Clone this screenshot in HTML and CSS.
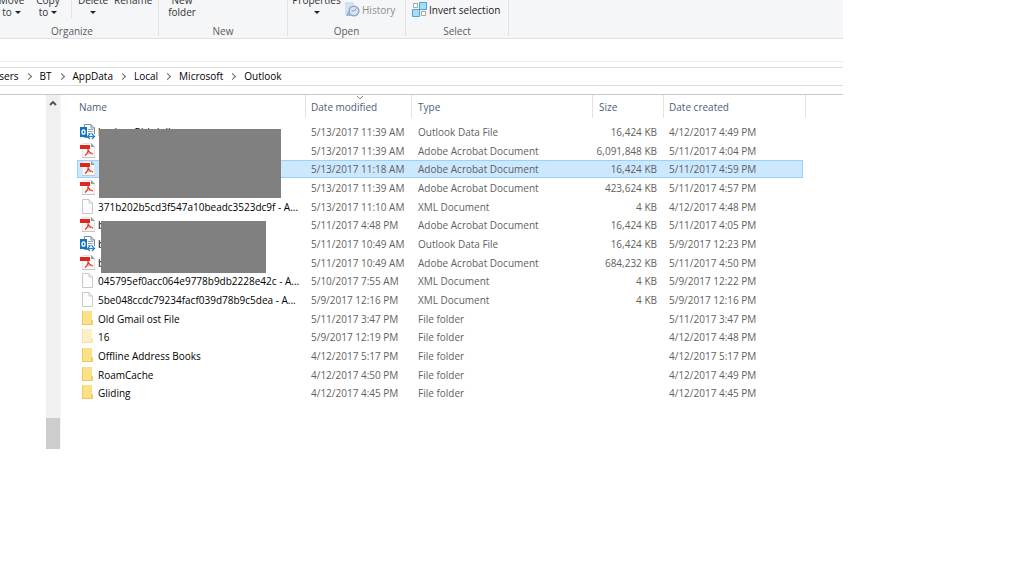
FILE: index.html
```html
<!DOCTYPE html>
<html lang="en">
<head>
<meta charset="utf-8">
<title>Outlook</title>
<link rel="stylesheet" href="styles.css">
</head>
<body>
<svg class="sprites" aria-hidden="true">
  <symbol id="i-pdf" viewBox="0 0 16 16">
    <path d="M2.500 .5H11L14.500 4V14.500H2.500Z" fill="#fbfaf9" stroke="#e6e3e1"/>
    <path d="M2 14.500H15" stroke="#c9c2bf"/>
    <path d="M11 0V4H15Z" fill="#8fa396"/>
    <path d="M0 2H10V6H0Z" fill="#e0261c"/>
    <path d="M5 12.500C7 11 8.500 8 8 5.500M8 7C9 9.500 11 10.500 13 11" fill="none" stroke="#e0362c" stroke-width="1.200"/>
    <path d="M7 10.500C9 10 10 10 12 10.500" fill="none" stroke="#ea7a73"/>
  </symbol>
  <symbol id="i-outlook" viewBox="0 0 16 16">
    <path d="M4.500 .5H11L14.500 4V13.500H4.500Z" fill="#fff" stroke="#7d8c99"/>
    <path d="M11 .5V4H14.500" fill="none" stroke="#7d8c99"/>
    <path d="M8 5.500H13M8 7.500H13M8 9.500H13" stroke="#8ea9bf"/>
    <path d="M0 3H7V13H0Z" fill="#1273c0"/>
    <ellipse cx="3.500" cy="8" rx="1.500" ry="2.200" fill="none" stroke="#fff" stroke-width="1.300"/>
    <path d="M8 10H16V15H8Z" fill="#fff"/>
    <path d="M10 10L7.500 12.500L10 15M12 10L14.500 12.500L12 15M8 12.500H14" fill="none" stroke="#1f7fc8" stroke-width="1.200"/>
  </symbol>
  <symbol id="i-file" viewBox="0 0 16 16">
    <path d="M2.500 .5H9L12.500 4V14.500H2.500Z" fill="#fdfdfd" stroke="#c9c9c9"/>
    <path d="M9 .5V4H12.500" fill="none" stroke="#c9c9c9"/>
  </symbol>
  <symbol id="i-folder" viewBox="0 0 16 16">
    <path d="M2 0H12V9L13 10V14H2Z" fill="#fbe28a"/>
    <path d="M2 0H3V14H2ZM2 13H13V14H2Z" fill="#edca55"/>
    <path d="M11 9H12L13 10V14H11Z" fill="#f0cf5e"/>
  </symbol>
</svg>
<main class="window">
  <header class="ribbon">
    <section class="group organize">
      <div class="tools">
        <button class="tool move">Move<br>to<i class="caret"></i></button>
        <button class="tool copy">Copy<br>to<i class="caret"></i></button>
        <button class="tool delete">Delete<br><i class="caret"></i></button>
        <button class="tool rename">Rename</button>
      </div>
      <h2>Organize</h2>
    </section>
    <section class="group new">
      <div class="tools"><button class="tool folder">New<br>folder</button></div>
      <h2>New</h2>
    </section>
    <section class="group open">
      <div class="tools">
        <button class="tool properties">Properties<br><i class="caret"></i></button>
        <button class="line-tool" disabled>
          <svg width="15" height="15" viewBox="0 0 15 15" aria-hidden="true">
            <path d="M0 0H9V13H0Z" fill="#d3e2f1"/>
            <circle cx="9" cy="9" r="4.800" fill="#dde6ef" stroke="#8ea9c6" stroke-width="1.500"/>
            <path d="M9 9L11.500 6.500M9 9H6.500" fill="none" stroke="#7c9abb"/>
            <path d="M1 14H7L3 9Z" fill="#9fb6cf"/>
          </svg>History</button>
      </div>
      <h2>Open</h2>
    </section>
    <section class="group select">
      <div class="tools">
        <button class="line-tool">
          <svg width="15" height="15" viewBox="0 0 15 15" aria-hidden="true">
            <path d="M7.500 .5H14.500V7.500H7.500ZM.5 7.500H7.500V14.500H.5Z" fill="#a9dcf8" stroke="#4ba3d6"/>
            <path d="M1.500 1.500H5.500V5.500H1.500ZM9.500 9.500H13.500V13.500H9.500Z" fill="#fff" stroke="#a5a5a5"/>
          </svg>Invert selection</button>
      </div>
      <h2>Select</h2>
    </section>
  </header>
  <nav class="address" aria-label="Path">
    <ol class="crumbs">
      <li><a href="#">Users</a></li>
      <li><a href="#">BT</a></li>
      <li><a href="#">AppData</a></li>
      <li><a href="#">Local</a></li>
      <li><a href="#">Microsoft</a></li>
      <li><a href="#">Outlook</a></li>
    </ol>
  </nav>
  <div class="content">
    <div class="scrollbar">
      <svg class="up" width="8" height="6" viewBox="0 0 8 6" aria-hidden="true"><path d="M1 5L4 2L7 5" fill="none" stroke="#505050" stroke-width="1.800"/></svg>
      <div class="thumb"></div>
    </div>
    <div class="listing">
      <table>
        <colgroup><col class="c-name"><col class="c-date"><col class="c-type"><col class="c-size"><col class="c-created"><col class="c-end"></colgroup>
        <thead><tr><th>Name</th><th class="sorted">Date modified<svg class="sort" width="8" height="4" viewBox="0 0 8 4" aria-hidden="true"><path d="M1 0L4 3L7 0" fill="none" stroke="#8a8a8a"/></svg></th><th>Type</th><th>Size</th><th colspan="2">Date created</th></tr></thead>
        <tbody>
          <tr><td><svg class="icon"><use href="#i-outlook"/></svg>backup Bbbdull</td><td>5/13/2017 11:39 AM</td><td>Outlook Data File</td><td>16,424 KB</td><td>4/12/2017 4:49 PM</td></tr>
          <tr><td><svg class="icon"><use href="#i-pdf"/></svg></td><td>5/13/2017 11:39 AM</td><td>Adobe Acrobat Document</td><td>6,091,848 KB</td><td>5/11/2017 4:04 PM</td></tr>
          <tr class="selected"><td><svg class="icon"><use href="#i-pdf"/></svg></td><td>5/13/2017 11:18 AM</td><td>Adobe Acrobat Document</td><td>16,424 KB</td><td>5/11/2017 4:59 PM</td></tr>
          <tr><td><svg class="icon"><use href="#i-pdf"/></svg></td><td>5/13/2017 11:39 AM</td><td>Adobe Acrobat Document</td><td>423,624 KB</td><td>5/11/2017 4:57 PM</td></tr>
          <tr><td><svg class="icon"><use href="#i-file"/></svg>371b202b5cd3f547a10beadc3523dc9f - A...</td><td>5/13/2017 11:10 AM</td><td>XML Document</td><td>4 KB</td><td>4/12/2017 4:48 PM</td></tr>
          <tr><td><svg class="icon"><use href="#i-pdf"/></svg>b</td><td>5/11/2017 4:48 PM</td><td>Adobe Acrobat Document</td><td>16,424 KB</td><td>5/11/2017 4:05 PM</td></tr>
          <tr><td><svg class="icon"><use href="#i-outlook"/></svg>b</td><td>5/11/2017 10:49 AM</td><td>Outlook Data File</td><td>16,424 KB</td><td>5/9/2017 12:23 PM</td></tr>
          <tr><td><svg class="icon"><use href="#i-pdf"/></svg>b</td><td>5/11/2017 10:49 AM</td><td>Adobe Acrobat Document</td><td>684,232 KB</td><td>5/11/2017 4:50 PM</td></tr>
          <tr><td><svg class="icon"><use href="#i-file"/></svg>045795ef0acc064e9778b9db2228e42c - A...</td><td>5/10/2017 7:55 AM</td><td>XML Document</td><td>4 KB</td><td>5/9/2017 12:22 PM</td></tr>
          <tr><td><svg class="icon"><use href="#i-file"/></svg>5be048ccdc79234facf039d78b9c5dea - A...</td><td>5/9/2017 12:16 PM</td><td>XML Document</td><td>4 KB</td><td>5/9/2017 12:16 PM</td></tr>
          <tr><td><svg class="icon"><use href="#i-folder"/></svg>Old Gmail ost File</td><td>5/11/2017 3:47 PM</td><td>File folder</td><td></td><td>5/11/2017 3:47 PM</td></tr>
          <tr><td><svg class="icon faded"><use href="#i-folder"/></svg>16</td><td>5/9/2017 12:19 PM</td><td>File folder</td><td></td><td>4/12/2017 4:48 PM</td></tr>
          <tr><td><svg class="icon"><use href="#i-folder"/></svg>Offline Address Books</td><td>4/12/2017 5:17 PM</td><td>File folder</td><td></td><td>4/12/2017 5:17 PM</td></tr>
          <tr><td><svg class="icon"><use href="#i-folder"/></svg>RoamCache</td><td>4/12/2017 4:50 PM</td><td>File folder</td><td></td><td>4/12/2017 4:49 PM</td></tr>
          <tr><td><svg class="icon"><use href="#i-folder"/></svg>Gliding</td><td>4/12/2017 4:45 PM</td><td>File folder</td><td></td><td>4/12/2017 4:45 PM</td></tr>
        </tbody>
      </table>
      <div class="mask first"></div>
      <div class="mask second"></div>
    </div>
  </div>
</main>
</body>
</html>
```
FILE: styles.css
```css
* { box-sizing: border-box; }
body { margin: 0; background: #fff; color: #1c1c1c; font: 10px/12px "Open Sans", "Noto Sans", sans-serif; }
.sprites { display: none; }
.window { margin-right: 181px; overflow: hidden; }
button { margin: 0; padding: 0; border: 0; background: none; font: inherit; color: #333; white-space: nowrap; }

.ribbon { display: flex; height: 39px; background: #f5f6f7; border-bottom: 1px solid #dfe1e3; overflow: hidden; }
.group { display: flex; flex-direction: column; flex: none; height: 36px; border-right: 1px solid #e2e3e4; }
.organize { width: 173px; margin-left: -14px; }
.organize h2 { padding-left: 14px; padding-right: 14px; }
.new { width: 129px; }
.open { width: 118px; }
.select { width: 103px; }
.tools { display: flex; flex: none; height: 24px; align-items: flex-start; }
.group h2 { margin: 0; font-size: 10px; font-weight: 400; line-height: 14px; color: #5c5c5c; text-align: center; }
.tool { flex: none; text-align: center; margin-top: -6px; }
.caret { display: inline-block; margin-left: 3px; vertical-align: 2px; border: 3px solid transparent; border-top-color: #222; border-bottom: 0; }
.move { width: 39px; padding-left: 12px; }
.copy { width: 47px; border-right: 1px solid #e2e3e4; }
.delete { width: 42px; }
.delete .caret, .properties .caret { margin-left: 0; }
.rename { width: 36px; }
.folder { width: 46px; }
.properties { width: 57px; }
.line-tool { display: flex; align-items: center; gap: 2px; height: 15px; margin-top: 2px; color: #222; }
.line-tool:disabled { color: #8f8f8f; }
.select .line-tool { margin-left: 6px; }

.address { margin-top: 22px; padding: 5px 0 8px; border-top: 1px solid #eee; border-bottom: 1px solid #c8c8c8; }
.crumbs { display: flex; height: 19px; margin: 0; padding: 0; list-style: none; border: solid #dcdcdc; border-width: 1px 0; line-height: 16px; }
.crumbs li { display: flex; align-items: center; height: 16px; }
.crumbs li:first-child { margin-left: -8px; }
.crumbs a { color: #000; text-decoration: none; }
.crumbs li + li::before { content: ""; width: 4px; height: 4px; margin: 0 9px 0 7px; border: solid #666; border-width: 1px 1px 0 0; transform: rotate(45deg); }

.content { display: flex; }
.scrollbar { display: flex; flex-direction: column; justify-content: space-between; align-items: center; width: 14px; margin-left: 46px; background: #f0f0f0; }
.up { margin-top: 5px; }
.thumb { width: 14px; height: 31px; background: #cdcdcd; }
.listing { position: relative; flex: 1; padding: 0 0 47px 16px; border-left: 1px solid #f7f7f7; }
table { width: 729px; table-layout: fixed; border-collapse: separate; border-spacing: 0; }
.c-name { width: 229px; }
.c-date { width: 106px; }
.c-type { width: 181px; }
.c-size { width: 71px; }
.c-created { width: 139px; }
.c-end { width: 3px; }
th { position: relative; height: 23px; padding: 0 0 0 6px; border-right: 1px solid #e2e2e2; font-weight: 400; text-align: left; color: #4c607a; }
th:first-child { padding-left: 2px; }
.sort { position: absolute; top: 1px; left: 50px; }
thead::after { content: ""; display: block; height: 4px; }
td { height: 19px; padding: 0 0 0 6px; vertical-align: middle; line-height: 16px; white-space: nowrap; color: #5f5f5f; }
tr:nth-child(3n) td { height: 18px; }
td:nth-child(2), th:nth-child(2), td:nth-child(5), th:nth-child(5) { padding-left: 5px; }
td:first-child { padding-left: 3px; color: #000; }
td:nth-child(4) { padding: 0 7px 0 0; text-align: right; }
.icon { width: 16px; height: 16px; margin-right: 2px; vertical-align: top; }
.faded { opacity: .5; }
.selected td { background: #cce8ff; border: solid #99d1ff; border-width: 1px 0; }
.selected td:first-child { border-left-width: 1px; padding-left: 2px; }
.selected td:last-child { border-right-width: 1px; }
.mask { position: absolute; background: #808080; }
.first { left: 38px; top: 34px; width: 182px; height: 69px; }
.second { left: 40px; top: 126px; width: 165px; height: 52px; }
```
